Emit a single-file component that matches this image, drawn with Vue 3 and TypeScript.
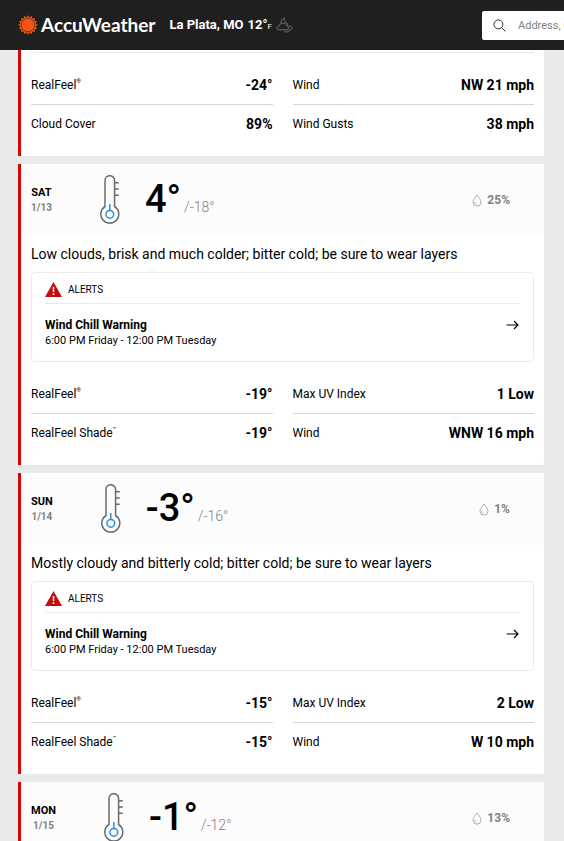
<script setup lang="ts">
interface Metric {
  label: string
  mark?: string
  value: string
}

interface Day {
  name: string
  date: string
  high: string
  low: string
  precip: string
  phrase: string
  metrics: Metric[]
}

const alert = {
  title: 'Wind Chill Warning',
  period: '6:00 PM Friday - 12:00 PM Tuesday',
}

const friday: Metric[] = [
  { label: 'RealFeel', mark: '®', value: '-24°' },
  { label: 'Wind', value: 'NW 21 mph' },
  { label: 'Cloud Cover', value: '89%' },
  { label: 'Wind Gusts', value: '38 mph' },
]

const days: Day[] = [
  {
    name: 'SAT',
    date: '1/13',
    high: '4°',
    low: '-18°',
    precip: '25%',
    phrase: 'Low clouds, brisk and much colder; bitter cold; be sure to wear layers',
    metrics: [
      { label: 'RealFeel', mark: '®', value: '-19°' },
      { label: 'Max UV Index', value: '1 Low' },
      { label: 'RealFeel Shade', mark: '™', value: '-19°' },
      { label: 'Wind', value: 'WNW 16 mph' },
    ],
  },
  {
    name: 'SUN',
    date: '1/14',
    high: '-3°',
    low: '-16°',
    precip: '1%',
    phrase: 'Mostly cloudy and bitterly cold; bitter cold; be sure to wear layers',
    metrics: [
      { label: 'RealFeel', mark: '®', value: '-15°' },
      { label: 'Max UV Index', value: '2 Low' },
      { label: 'RealFeel Shade', mark: '™', value: '-15°' },
      { label: 'Wind', value: 'W 10 mph' },
    ],
  },
  {
    name: 'MON',
    date: '1/15',
    high: '-1°',
    low: '-12°',
    precip: '13%',
    phrase: '',
    metrics: [],
  },
]

const rays = Array.from({ length: 16 }, (_, i) => i * 22.5)
</script>

<template>
  <div class="page">
    <header class="topbar">
      <a class="brand" href="#">
        <svg class="sun" viewBox="0 0 20 20" aria-hidden="true">
          <path
            v-for="angle in rays"
            :key="angle"
            d="M8.4 2.6 10 .2l1.6 2.4z"
            fill="#f05514"
            :transform="`rotate(${angle} 10 10)`"
          />
          <circle cx="10" cy="10" r="8" fill="#f05514" />
          <circle cx="10" cy="10" r="6.8" fill="none" stroke="#4a2418" stroke-width=".7" />
        </svg>
        <span class="wordmark">AccuWeather</span>
      </a>
      <a class="place" href="#">
        <span>La Plata, MO</span>
        <span class="now">12°<small>F</small></span>
        <svg class="sky" viewBox="0 0 17 16" fill="none" stroke="#77777a" stroke-width=".9" aria-hidden="true">
          <path d="M4.800 6.300C4.800 3.800 6.200 1.600 8.300.8c-.6 2.200.2 3.700 1.700 4.500 1.300.8 1.900 1.900 1.700 3.300" />
          <path d="M3.200 12.800c-3.200 0-3.200-3.500 0-3.700C3.900 5.400 9.500 5 10.800 9c2.700-.2 2.800 3.800 0 3.800z" />
          <path d="M13.200 9.200c3.500-.4 3.800 3.300.6 4-1.300 1.600-3.600 2.300-5.800 1.400" />
        </svg>
      </a>
      <label class="search">
        <svg viewBox="0 0 14 14" fill="none" stroke="#222" aria-hidden="true">
          <circle cx="5.800" cy="5.800" r="4.800" />
          <path d="m9.300 9.300 4 4" />
        </svg>
        <input type="search" aria-label="Location" placeholder="Address, City or Zip Code" />
      </label>
    </header>

    <main class="days">
      <article class="card">
        <div class="alert-end"></div>
        <dl class="metrics">
          <div v-for="m in friday" :key="m.label" class="metric">
            <dt>{{ m.label }}<sup v-if="m.mark">{{ m.mark }}</sup></dt>
            <dd>{{ m.value }}</dd>
          </div>
        </dl>
      </article>

      <article v-for="day in days" :key="day.date" class="card">
        <div class="summary">
          <h2 class="date">
            <span>{{ day.name }}</span>
            <span class="numeric">{{ day.date }}</span>
          </h2>
          <svg class="thermo" viewBox="0 0 20 50" fill="none" stroke="#6b6b6b" stroke-width="1.500" aria-hidden="true">
            <path d="M5 31.500V5.500a4.800 4.800 0 0 1 9.600 0v26a9 9 0 1 1-9.600 0z" />
            <path d="M14.600 7.700h4.200M14.600 14h4.200M14.600 20.200h4.200" />
            <g stroke="#2f8fdd">
              <circle cx="9.800" cy="39.300" r="3.900" />
              <path d="M9.800 35.400V29" />
            </g>
          </svg>
          <p class="temps">
            <span class="high">{{ day.high }}</span>
            <span class="low">/{{ day.low }}</span>
          </p>
          <p class="precip">
            <svg viewBox="0 0 10 13" fill="none" stroke="#b0b0b0" aria-hidden="true">
              <path d="M5 .9C3.500 3.200 1 5.600 1 8.200a4 4 0 0 0 8 0C9 5.600 6.500 3.200 5 .9z" />
              <path d="M3 7.500c-.2 1.500.3 2.400 1.500 2.900" />
            </svg>
            <span>{{ day.precip }}</span>
          </p>
        </div>

        <template v-if="day.metrics.length">
          <p class="phrase">{{ day.phrase }}</p>
          <section class="alert">
            <h3 class="alert-head">
              <svg viewBox="0 0 17 15" aria-hidden="true">
                <path d="M8.500 0 17 15H0z" fill="#c00d0d" />
                <path d="M8.500 5v5M8.500 11.300v1.700" stroke="#fff" stroke-width="1.500" />
              </svg>
              <span>ALERTS</span>
            </h3>
            <a class="alert-link" href="#">
              <span>
                <strong>{{ alert.title }}</strong>
                <span class="period">{{ alert.period }}</span>
              </span>
              <svg viewBox="0 0 14 12" fill="none" stroke="#000" stroke-width="1.200" aria-hidden="true">
                <path d="M.5 6h11.500M8 2l4 4-4 4" />
              </svg>
            </a>
          </section>
          <dl class="metrics">
            <div v-for="m in day.metrics" :key="m.label" class="metric">
              <dt>{{ m.label }}<sup v-if="m.mark">{{ m.mark }}</sup></dt>
              <dd>{{ m.value }}</dd>
            </div>
          </dl>
        </template>
      </article>
    </main>
  </div>
</template>

<style>
body {
  background: #eaeaea;
}
</style>

<style scoped>
.page {
  height: 100vh;
  overflow: hidden;
  background: #eaeaea;
  color: #000;
  font-family: Roboto, "Liberation Sans", sans-serif;
}

.page * {
  box-sizing: border-box;
  margin: 0;
}

a {
  color: inherit;
  text-decoration: none;
}

svg {
  display: block;
  flex: none;
}

.topbar {
  display: flex;
  align-items: center;
  height: 50px;
  padding-left: 18px;
  overflow: hidden;
  background: #1f1f1f;
  color: #fff;
  white-space: nowrap;
}

.brand {
  display: flex;
  align-items: center;
  gap: 3px;
}

.sun {
  width: 20px;
  height: 20px;
}

.wordmark {
  font: 700 19px/24px Lato, sans-serif;
}

.place {
  display: flex;
  align-items: center;
  gap: 4px;
  margin-left: 14px;
  font-size: 13px;
  line-height: 16px;
  font-weight: 700;
}

.now small {
  font-size: 8px;
  font-weight: 400;
  line-height: 8px;
}

.sky {
  width: 17px;
  height: 16px;
}

.search {
  display: flex;
  flex: none;
  align-items: center;
  gap: 12px;
  width: 300px;
  height: 29px;
  margin-right: -218px;
  margin-left: auto;
  padding-left: 11px;
  border-radius: 2px;
  background: #fff;
}

.search svg {
  width: 13px;
  height: 13px;
}

.search input {
  flex: 1;
  border: 0;
  padding: 0;
  background: none;
  font: 11px Roboto, sans-serif;
}

.search input::placeholder {
  color: #808080;
}

.days {
  display: grid;
  gap: 8px;
  padding: 0 20px 0 18px;
}

.card {
  border-left: 3px solid #d30808;
  border-radius: 0 2px 2px 0;
  background: #fff;
  padding-bottom: 13px;
}

.alert-end {
  height: 3px;
  margin: 0 10px;
  border: 1px solid #eaeaea;
  border-top: 0;
  border-radius: 0 0 4px 4px;
}

.summary {
  display: flex;
  align-items: center;
  height: 72px;
  padding: 0 34px 0 10px;
  background: #fcfcfc;
}

.date {
  display: grid;
  justify-items: center;
  font-size: 11px;
  line-height: 15px;
  font-weight: 700;
}

.numeric {
  color: #808080;
  font-size: 10px;
}

.thermo {
  width: 20px;
  height: 50px;
  margin-left: 48px;
}

.temps {
  display: flex;
  align-items: baseline;
  gap: 3px;
  margin-left: 25px;
  padding-top: 6px;
  line-height: 50px;
}

.high {
  font-size: 38px;
  font-weight: 500;
}

.low {
  color: #808080;
  font-size: 14px;
  font-weight: 300;
}

.precip {
  display: flex;
  align-items: center;
  gap: 5px;
  margin-left: auto;
  color: #808080;
  font-size: 12px;
  font-weight: 700;
}

.precip svg {
  width: 10px;
  height: 13px;
}

.phrase {
  padding: 8px 10px;
  font-size: 14px;
  line-height: 20px;
}

.alert {
  height: 90px;
  margin: 0 10px;
  padding: 0 13px;
  border: 1px solid #eaeaea;
  border-radius: 4px;
}

.alert-head {
  display: flex;
  align-items: center;
  gap: 6px;
  height: 31px;
  padding-top: 3px;
  border-bottom: 1px solid #eaeaea;
  font-size: 10px;
  font-weight: 400;
}

.alert-head svg {
  width: 17px;
  height: 15px;
}

.alert-link {
  display: flex;
  align-items: flex-start;
  justify-content: space-between;
  padding-top: 14px;
  font-size: 11px;
  line-height: 15px;
}

.alert-link strong,
.period {
  display: block;
}

.alert-link strong {
  font-size: 12px;
}

.alert-link svg {
  width: 14px;
  height: 12px;
  margin-top: 1px;
}

.metrics {
  display: grid;
  grid-template-columns: 1fr 1fr;
  column-gap: 20px;
  padding: 13px 10px 0;
}

.metric {
  display: flex;
  align-items: center;
  justify-content: space-between;
  height: 38px;
}

.metric:nth-child(-n + 2) {
  height: 39px;
  border-bottom: 1px solid #d6d6d6;
}

dt {
  font-size: 12px;
}

sup {
  font-size: 6px;
  line-height: 6px;
  vertical-align: top;
}

dd {
  font-size: 14px;
  font-weight: 700;
}
</style>
